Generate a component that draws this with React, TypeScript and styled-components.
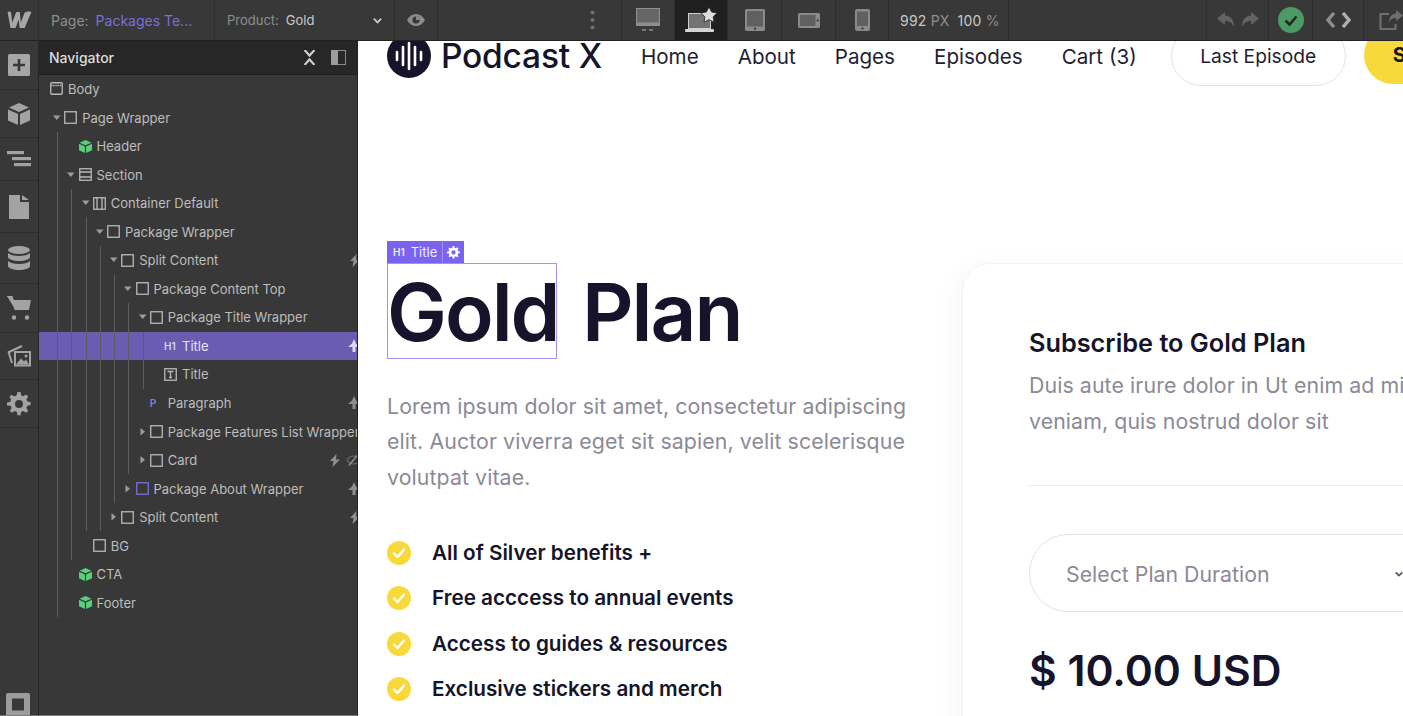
import React from 'react';
import styled, { createGlobalStyle } from 'styled-components';

const GlobalStyle = createGlobalStyle`
  html, body { margin: 0; padding: 0; background: #fff; }
  body { font-family: Inter, "Liberation Sans", sans-serif; overflow: hidden; }
  * { box-sizing: border-box; }
`;

const Screen = styled.div`
  width: 1403px;
  height: 716px;
  display: flex;
  flex-direction: column;
  overflow: hidden;
`;

/* ---------- top bar ---------- */

const TopBar = styled.div`
  height: 41px;
  flex: none;
  display: flex;
  background: #383838;
  border-bottom: 1px solid #222;
  color: #c8c8c8;
  font-size: 14px;
`;

const Cell = styled.div<{ $w?: number; $active?: boolean; $grow?: boolean }>`
  width: ${(p) => (p.$w ? `${p.$w}px` : 'auto')};
  flex: ${(p) => (p.$grow ? 1 : 'none')};
  display: flex;
  align-items: center;
  justify-content: center;
  border-right: 1px solid #2e2e2e;
  background: ${(p) => (p.$active ? '#202020' : 'transparent')};
`;

const PageCell = styled(Cell)`
  justify-content: flex-start;
  padding-left: 12px;
  gap: 7px;
`;

const ProductCell = styled(Cell)`
  justify-content: flex-start;
  padding-left: 12px;
  gap: 7px;
  font-size: 13px;
`;

const DotsCell = styled(Cell)`
  justify-content: flex-end;
  padding-right: 26px;
`;

const ShareCell = styled(Cell)`
  justify-content: flex-start;
  padding-left: 15px;
  overflow: hidden;
  border-right: 0;
`;

const Muted = styled.span`
  color: #8e8e8e;
`;

const PageName = styled.span`
  color: #7d6fd6;
`;

const ChevronSlot = styled.span`
  margin-left: auto;
  margin-right: 11px;
  display: flex;
`;

const Readout = styled(Cell)`
  font-size: 14px;
  gap: 8px;
  justify-content: flex-start;
  padding-left: 11px;
  letter-spacing: 0.2px;
`;

/* ---------- body ---------- */

const Workspace = styled.div`
  flex: 1;
  display: flex;
  min-height: 0;
`;

const Rail = styled.div`
  width: 39px;
  flex: none;
  display: flex;
  flex-direction: column;
  background: #383838;
  border-right: 1px solid #262626;
  border-bottom: 1px solid #7a7a7a;
`;

const RailItem = styled.div<{ $h: number }>`
  height: ${(p) => p.$h}px;
  flex: none;
  display: flex;
  align-items: center;
  justify-content: center;
  border-bottom: 1px solid #2e2e2e;
`;

const RailFooter = styled.div`
  margin-top: auto;
  display: flex;
  justify-content: center;
  padding-right: 2px;
`;

const Panel = styled.div`
  width: 319px;
  flex: none;
  background: #383838;
  border-right: 1px solid #222;
  border-bottom: 1px solid #7a7a7a;
  overflow: hidden;
`;

const PanelHead = styled.div`
  height: 33.7px;
  background: #272727;
  border-bottom: 1px solid #1f1f1f;
  display: flex;
  align-items: center;
  padding: 0 11px 0 10px;
  color: #dcdcdc;
  font-size: 14px;
  font-weight: 500;
`;

const HeadIcons = styled.div`
  margin-left: auto;
  display: flex;
  align-items: center;
  gap: 16px;
`;

const Group = styled.div<{ $depth: number }>`
  position: relative;
  &::before {
    content: '';
    position: absolute;
    z-index: 1;
    top: 0;
    bottom: 0;
    left: ${(p) => 3.75 + 14.25 * p.$depth}px;
    width: 1px;
    background: #5c5c5c;
  }
`;

const Row = styled.div<{ $depth: number; $selected?: boolean }>`
  height: 28.56px;
  display: flex;
  align-items: center;
  padding-left: ${(p) => 11 + 14.25 * (p.$depth - 1)}px;
  font-size: 13px;
  white-space: nowrap;
  overflow: hidden;
  position: relative;
  color: ${(p) => (p.$selected ? '#e6e3f6' : '#bdbdbd')};
  background: ${(p) => (p.$selected ? '#695cb1' : 'transparent')};
`;

const CaretSlot = styled.span`
  width: 14.25px;
  flex: none;
  display: flex;
  padding-left: 3px;
`;

const IconSlot = styled.span`
  width: 18px;
  flex: none;
  display: flex;
  align-items: center;
`;

const TagIcon = styled.span<{ $purple?: boolean }>`
  font-size: 10px;
  font-weight: 600;
  color: ${(p) => (p.$purple ? '#8a7be0' : '#d8d4ee')};
  line-height: 1;
`;

const Badges = styled.span`
  position: absolute;
  right: -3px;
  top: 0;
  bottom: 0;
  display: flex;
  align-items: center;
  gap: 7px;
`;

/* ---------- canvas ---------- */

const Canvas = styled.main`
  flex: 1;
  min-width: 0;
  overflow: hidden;
  background: #fff;
  color: #15142a;
`;

const Inner = styled.div`
  width: 1200px;
  margin-top: -15px;
  padding-left: 29px;
`;

const SiteHeader = styled.header`
  height: 60px;
  display: flex;
  align-items: center;
`;

const Brand = styled.div`
  display: flex;
  align-items: center;
  gap: 10px;
  font-size: 33.5px;
  font-weight: 500;
  letter-spacing: -0.2px;
  margin-right: 39px;
`;

const SiteNav = styled.nav`
  display: flex;
  gap: 39px;
  font-size: 20.6px;
  color: #1f1e33;
  margin-right: 34px;
`;

const OutlineButton = styled.div`
  width: 175px;
  height: 60px;
  flex: none;
  border: 1px solid #e3e3e8;
  border-radius: 30px;
  display: flex;
  align-items: center;
  justify-content: center;
  font-size: 19.2px;
  color: #1f1e33;
  margin-right: 18px;
`;

const YellowButton = styled.div`
  width: 175px;
  height: 58px;
  flex: none;
  align-self: flex-start;
  border-radius: 30px;
  background: #f8d93c;
  padding-left: 29px;
  display: flex;
  align-items: center;
  font-size: 20px;
  font-weight: 700;
`;

const Columns = styled.div`
  display: flex;
  align-items: flex-start;
  margin-top: 177px;
`;

const LeftCol = styled.div`
  width: 575px;
  flex: none;
`;

const Heading = styled.h1`
  margin: 0;
  height: 96px;
  font-size: 80px;
  line-height: 98px;
  font-weight: 600;
  white-space: nowrap;
  letter-spacing: -2px;
`;

const Selected = styled.span`
  position: relative;
  display: inline-block;
  width: 170px;
  height: 96px;
  margin-right: 25px;
  outline: 1px solid #a292f5;
  outline-offset: -1px;
`;

const SelectTag = styled.span`
  position: absolute;
  left: 0;
  top: -22px;
  height: 22px;
  display: flex;
  align-items: stretch;
  background: #7a63ee;
  color: #efecff;
  font-size: 13px;
  line-height: 22px;
  font-weight: 400;
  letter-spacing: 0;
`;

const TagLabel = styled.span`
  display: flex;
  align-items: center;
  gap: 6px;
  padding: 0 5px 0 6px;
  border-right: 1px solid #a292f5;
`;

const TagGear = styled.span`
  width: 21px;
  display: flex;
  align-items: center;
  justify-content: center;
`;

const TagH1 = styled.span`
  font-size: 10px;
  font-weight: 600;
`;

const Lead = styled.p`
  margin: 30px 0 0;
  width: 535px;
  font-size: 21.3px;
  line-height: 35.4px;
  color: #8b8a96;
  letter-spacing: 0.1px;
`;

const Features = styled.ul`
  list-style: none;
  margin: 46px 0 0;
  padding: 0;
  display: flex;
  flex-direction: column;
  gap: 21.2px;
`;

const Feature = styled.li`
  display: flex;
  align-items: center;
  gap: 21px;
  font-size: 20.7px;
  line-height: 24px;
  font-weight: 600;
`;

const Card = styled.section`
  width: 560px;
  height: 560px;
  flex: none;
  border: 1px solid #f3f3f6;
  border-radius: 28px;
  padding: 62px 0 0 66px;
  box-shadow: -6px 4px 24px rgba(20, 20, 70, 0.04);
`;

const CardTitle = styled.h2`
  margin: 0;
  font-size: 25.3px;
  line-height: 34px;
  font-weight: 600;
  white-space: nowrap;
`;

const CardText = styled.p`
  margin: 7px 0 0;
  font-size: 21.3px;
  line-height: 36px;
  color: #8b8a96;
  white-space: nowrap;
  letter-spacing: 0.1px;
`;

const Rule = styled.hr`
  margin: 46px 0 0;
  border: 0;
  border-top: 1px solid #ebebef;
`;

const PlanSelect = styled.div`
  margin-top: 48px;
  width: 490px;
  height: 78px;
  border: 1px solid #e3e3e8;
  border-radius: 39px;
  display: flex;
  align-items: center;
  padding: 2px 0 0 36px;
  gap: 124px;
  font-size: 21.3px;
  color: #8b8a96;
`;

const Price = styled.div`
  margin-top: 33px;
  font-size: 42.6px;
  line-height: 52px;
  font-weight: 600;
  white-space: nowrap;
`;

/* ---------- icons ---------- */

const G = '#a3a3a3';

const WebflowLogo = () => (
  <svg width="25" height="18" viewBox="1.5 2 22 15">
    <path d="M2 2.5c1.5-1 3-.6 3.2 1L6 12l3.6-9.5h3.2L13.6 12l3-8c.6-1.6 3-2.4 6.4-1.6L17 16.5h-4.4l-.8-7.2-2.8 7.2H4.6z" fill="#a8a8a8" />
  </svg>
);

const Chevron = ({ color = '#c8c8c8', size = 11 }: { color?: string; size?: number }) => (
  <svg width={size} height={size} viewBox="0 0 12 12">
    <path d="M2 4l4 4 4-4" fill="none" stroke={color} strokeWidth="2" />
  </svg>
);

const Eye = () => (
  <svg width="20" height="14" viewBox="0 0 20 14">
    <path d="M1 7c2.4-4 5.4-6 9-6s6.600 2 9 6c-2.400 4-5.400 6-9 6s-6.600-2-9-6z" fill="#8c8c8c" />
    <circle cx="10" cy="7" r="3.600" fill="#383838" />
    <path d="M10 3.400a3.600 3.600 0 0 1 3.600 3.600h-3.600z" fill="#8c8c8c" />
  </svg>
);

const Dots = () => (
  <svg width="5" height="20" viewBox="0 0 5 20">
    <circle cx="2.500" cy="2.500" r="2" fill="#6f6f6f" />
    <circle cx="2.500" cy="10" r="2" fill="#6f6f6f" />
    <circle cx="2.500" cy="17.500" r="2" fill="#6f6f6f" />
  </svg>
);

const Desktop = () => (
  <svg width="24" height="24" viewBox="0 0 24 24">
    <rect x="0.500" y="0.500" width="23" height="17" fill="#666" stroke="#8e8e8e" />
    <rect x="0" y="14.500" width="24" height="3" fill="#8e8e8e" />
    <rect x="6" y="21" width="4" height="2" fill="#777" />
    <rect x="13" y="21" width="4" height="2" fill="#777" />
  </svg>
);

const LaptopStar = () => (
  <svg width="32" height="26" viewBox="0 0 32 26">
    <rect x="3.500" y="6.500" width="22" height="15" fill="#737373" stroke="#cfcfcf" />
    <rect x="0" y="22" width="29" height="3" rx="1" fill="#d4d4d4" />
    <path d="M24 0l2.700 5 5.300.9-3.800 3.900.8 5.400-5-2.500-5 2.500.8-5.400L16 5.900l5.300-.9z" fill="#dcdcdc" stroke="#202020" strokeWidth="0.800" />
  </svg>
);

const Tablet = () => (
  <svg width="20" height="22" viewBox="0 0 20 22">
    <rect width="20" height="22" rx="1.500" fill="#8a8a8a" />
    <rect x="2" y="2" width="16" height="15.500" fill="#606060" />
    <circle cx="10" cy="19.700" r="1.100" fill="#333" />
  </svg>
);

const TabletWide = () => (
  <svg width="22" height="15" viewBox="0 0 22 15">
    <rect width="22" height="15" rx="1.500" fill="#8a8a8a" />
    <rect x="2" y="2" width="15.500" height="11" fill="#606060" />
    <circle cx="19.700" cy="7.500" r="1.100" fill="#333" />
  </svg>
);

const Phone = () => (
  <svg width="15" height="22" viewBox="0 0 15 22">
    <rect width="15" height="22" rx="2" fill="#8a8a8a" />
    <rect x="2" y="2.500" width="11" height="14.500" fill="#606060" />
    <circle cx="7.500" cy="19.500" r="1.100" fill="#333" />
  </svg>
);

const UndoRedo = () => (
  <svg width="42" height="16" viewBox="0 0 42 16">
    <path d="M8 0L0 6.500 8 13V9c4 0 7 1.500 9 6 0-7-3-11-9-11.500z" fill="#636363" />
    <path d="M34 0l8 6.500-8 6.500V9c-4 0-7 1.500-9 6 0-7 3-11 9-11.500z" fill="#636363" />
  </svg>
);

const Published = () => (
  <svg width="26" height="26" viewBox="0 0 26 26">
    <circle cx="13" cy="13" r="13" fill="#4c9a64" />
    <path d="M7.500 13.500l4 4 7-8" fill="none" stroke="#1e2a22" strokeWidth="2.600" />
  </svg>
);

const CodeBrackets = () => (
  <svg width="25" height="16" viewBox="0 0 25 16">
    <path d="M8 1L2 8l6 7" fill="none" stroke="#8f8f8f" strokeWidth="3.400" />
    <path d="M17 1l6 7-6 7" fill="none" stroke="#b0b0b0" strokeWidth="3.400" />
  </svg>
);

const ShareOut = () => (
  <svg width="26" height="20" viewBox="0 0 26 20" style={{ flex: 'none' }}>
    <path d="M10 4H1.500v15h15v-5" fill="none" stroke="#6e6e6e" strokeWidth="2.200" />
    <path d="M17 0l7 5.500-7 5.500V8c-4 0-6 1.500-7 5 0-6 2.500-9 7-9.500z" fill="#6e6e6e" />
  </svg>
);

const Plus = () => (
  <svg width="22" height="22" viewBox="0 0 22 22">
    <rect width="22" height="22" rx="1.500" fill="#a6a6a6" />
    <path d="M11 5v12M5 11h12" stroke="#383838" strokeWidth="2.600" />
  </svg>
);

const Cube = ({ size = 22, color = G }: { size?: number; color?: string }) => (
  <svg width={size} height={size} viewBox="0 0 22 22">
    <path d="M11 0l10 4.500L11 9 1 4.500z" fill={color} />
    <path d="M0 6.500l10 4.500v11L0 17.500zM22 6.500L12 11v11l10-4.500z" fill={color} />
  </svg>
);

const Lines = () => (
  <svg width="24" height="16" viewBox="0 0 24 16">
    <rect x="0" y="0" width="17" height="3.200" fill={G} />
    <rect x="5" y="6" width="19" height="3.200" fill={G} />
    <rect x="7" y="12" width="17" height="3.200" fill={G} />
  </svg>
);

const Doc = () => (
  <svg width="20" height="24" viewBox="0 0 20 24">
    <path d="M0 0h11v7h9v17H0zM13 0l7 5h-7z" fill={G} />
  </svg>
);

const Database = () => (
  <svg width="22" height="24" viewBox="0 0 22 24">
    <ellipse cx="11" cy="4" rx="11" ry="4" fill={G} />
    <path d="M0 7c2 2 6 3 11 3s9-1 11-3v4c0 2.200-5 4-11 4S0 13.200 0 11z" fill={G} />
    <path d="M0 15c2 2 6 3 11 3s9-1 11-3v5c0 2.200-5 4-11 4S0 22.200 0 20z" fill={G} />
  </svg>
);

const Cart = () => (
  <svg width="24" height="24" viewBox="0 0 24 24">
    <path d="M0 0h5l1.500 4H24l-2 10H8.500" fill={G} />
    <path d="M0 0h4.500l4 14" fill="none" stroke={G} strokeWidth="1.800" />
    <circle cx="7" cy="21.500" r="2.200" fill={G} />
    <circle cx="20" cy="21.500" r="2.200" fill={G} />
  </svg>
);

const Images = () => (
  <svg width="24" height="22" viewBox="0 0 24 22">
    <path d="M1 7.500l14-6.500" stroke={G} strokeWidth="2" fill="none" />
    <path d="M1.500 7l3.500 11" stroke={G} strokeWidth="2" fill="none" />
    <rect x="7" y="6" width="17" height="15.500" fill={G} />
    <rect x="9" y="8" width="13" height="11.500" fill="#383838" />
    <path d="M9 19.500l5-6 3 3 2-2 3 5z" fill={G} />
    <circle cx="19" cy="11" r="1.500" fill={G} />
  </svg>
);

const GearPath = 'M10.500 0h3l.6 3.200 2.300 1 2.700-1.800 2.100 2.100-1.800 2.700 1 2.300 3.200.6v3l-3.200.6-1 2.300 1.800 2.700-2.100 2.100-2.700-1.800-2.300 1-.6 3.200h-3l-.6-3.200-2.300-1-2.700 1.800-2.100-2.100 1.800-2.700-1-2.300L0 13.500v-3l3.200-.6 1-2.300-1.800-2.700 2.100-2.100 2.700 1.800 2.300-1zM12 8a4 4 0 1 0 0 8 4 4 0 0 0 0-8z';

const Gear = ({ size = 24, color = G }: { size?: number; color?: string }) => (
  <svg width={size} height={size} viewBox="0 0 24 24">
    <path d={GearPath} fill={color} fillRule="evenodd" />
  </svg>
);

const StopSquare = () => (
  <svg width="24" height="22" viewBox="0 0 24 22">
    <path d="M2 0h20a2 2 0 0 1 2 2v20H0V2a2 2 0 0 1 2-2z" fill="#9c9c9c" />
    <rect x="6" y="5.500" width="12" height="12" fill="#383838" />
  </svg>
);

const CollapseArrows = () => (
  <svg width="11" height="15" viewBox="0 0 11 15">
    <path d="M0.500 0l5 5.500 5-5.500M0.500 15l5-5.500 5 5.500" fill="none" stroke="#cfcfcf" strokeWidth="2.200" />
  </svg>
);

const PanelDock = () => (
  <svg width="15" height="15" viewBox="0 0 15 15">
    <rect x="0.500" y="0.500" width="14" height="14" fill="none" stroke="#8a8a8a" />
    <rect x="0" y="0" width="7" height="15" fill="#9c9c9c" />
  </svg>
);

const Caret = ({ open }: { open: boolean }) => (
  <svg width="8" height="8" viewBox="0 0 8 8">
    {open ? <path d="M0 1.500h7.500L3.750 6z" fill="#9c9c9c" /> : <path d="M1.500 0v7.500L6 3.750z" fill="#9c9c9c" />}
  </svg>
);

const BoxIcon = ({ color = '#b9b9b9' }: { color?: string }) => (
  <svg width="13" height="13" viewBox="0 0 13 13">
    <rect x="0.750" y="0.750" width="11.500" height="11.500" fill="none" stroke={color} strokeWidth="1.300" />
  </svg>
);

const BodyIcon = () => (
  <svg width="13" height="13" viewBox="0 0 13 13">
    <rect x="0.750" y="0.750" width="11.500" height="11.500" rx="1" fill="none" stroke="#b9b9b9" strokeWidth="1.300" />
    <path d="M1 3.500h11" stroke="#b9b9b9" strokeWidth="1.300" strokeDasharray="1.500 0.700" />
  </svg>
);

const SectionIcon = () => (
  <svg width="13" height="13" viewBox="0 0 13 13">
    <rect x="0.750" y="0.750" width="11.500" height="11.500" fill="none" stroke="#b9b9b9" strokeWidth="1.300" />
    <path d="M1 4h11M1 9h11" stroke="#b9b9b9" strokeWidth="1.300" />
  </svg>
);

const ContainerIcon = () => (
  <svg width="13" height="13" viewBox="0 0 13 13">
    <rect x="0.750" y="0.750" width="11.500" height="11.500" fill="none" stroke="#b9b9b9" strokeWidth="1.300" />
    <path d="M4 1v11M9 1v11" stroke="#b9b9b9" strokeWidth="1.300" />
  </svg>
);

const TextIcon = () => (
  <svg width="13" height="13" viewBox="0 0 13 13">
    <rect x="0.750" y="0.750" width="11.500" height="11.500" fill="none" stroke="#b9b9b9" strokeWidth="1.300" />
    <path d="M3.500 3.500h6M6.500 3.500v6M5 9.500h3" fill="none" stroke="#b9b9b9" strokeWidth="1.300" />
  </svg>
);

const Bolt = () => (
  <svg width="10" height="13" viewBox="0 0 10 13">
    <path d="M6.500 0L0 7h3.500L2.500 13 10 5.500H6z" fill="#8f8f8f" />
  </svg>
);

const Trigger = ({ color = '#8f8f8f' }: { color?: string }) => (
  <svg width="12" height="13" viewBox="0 0 12 13">
    <path d="M6 0l2 4.500 4 3.500H7.500v5h-3V8H0l4-3.500z" fill={color} />
  </svg>
);

const EyeOff = () => (
  <svg width="13" height="12" viewBox="0 0 13 12">
    <path d="M0 6c1.500-2.500 3.500-4 6.500-4S11.500 3.500 13 6c-1.500 2.500-3.500 4-6.500 4S1.500 8.500 0 6z" fill="none" stroke="#6f6f6f" strokeWidth="1.200" />
    <path d="M2 11.500L11 .5" stroke="#8f8f8f" strokeWidth="1.400" />
  </svg>
);

const YellowCheck = () => (
  <svg width="24" height="24" viewBox="0 0 24 24" style={{ flex: 'none' }}>
    <circle cx="12" cy="12" r="12" fill="#f8d93c" />
    <path d="M7 12.500l3.500 3.500 6.500-7.500" fill="none" stroke="#fff" strokeWidth="2.400" strokeLinecap="round" strokeLinejoin="round" />
  </svg>
);

const PodcastMark = () => (
  <svg width="44" height="44" viewBox="0 0 44 44">
    <circle cx="22" cy="22" r="22" fill="#15142a" />
    <g stroke="#fff" strokeWidth="2.600" strokeLinecap="round">
      <path d="M10 18v8M16 13v18M22 9v26M28 13v18M34 18v8" />
    </g>
  </svg>
);

/* ---------- data ---------- */

type Node = {
  label: string;
  icon: React.ReactNode;
  root?: boolean;
  open?: boolean;
  closed?: boolean;
  badges?: React.ReactNode;
  selected?: boolean;
  children?: Node[];
};

const box = <BoxIcon />;
const comp = <Cube size={13} color="#5ad07d" />;

const tree: Node[] = [
  { label: 'Body', icon: <BodyIcon />, root: true },
  {
    label: 'Page Wrapper',
    icon: box,
    open: true,
    children: [
      { label: 'Header', icon: comp },
      {
        label: 'Section',
        icon: <SectionIcon />,
        open: true,
        children: [
          {
            label: 'Container Default',
            icon: <ContainerIcon />,
            open: true,
            children: [
              {
                label: 'Package Wrapper',
                icon: box,
                open: true,
                children: [
                  {
                    label: 'Split Content',
                    icon: box,
                    open: true,
                    badges: <Bolt />,
                    children: [
                      {
                        label: 'Package Content Top',
                        icon: box,
                        open: true,
                        children: [
                          {
                            label: 'Package Title Wrapper',
                            icon: box,
                            open: true,
                            children: [
                              { label: 'Title', icon: <TagIcon>H1</TagIcon>, selected: true, badges: <Trigger color="#dcd8f2" /> },
                              { label: 'Title', icon: <TextIcon /> },
                            ],
                          },
                          { label: 'Paragraph', icon: <TagIcon $purple>P</TagIcon>, badges: <Trigger /> },
                          { label: 'Package Features List Wrapper', icon: box, closed: true },
                          { label: 'Card', icon: box, closed: true, badges: <><Bolt /><EyeOff /></> },
                        ],
                      },
                      { label: 'Package About Wrapper', icon: <BoxIcon color="#7d6fd6" />, closed: true, badges: <Trigger /> },
                    ],
                  },
                  { label: 'Split Content', icon: box, closed: true, badges: <Bolt /> },
                ],
              },
            ],
          },
          { label: 'BG', icon: box },
        ],
      },
      { label: 'CTA', icon: comp },
      { label: 'Footer', icon: comp },
    ],
  },
];

const railItems: { h: number; icon: React.ReactNode }[] = [
  { h: 49, icon: <Plus /> },
  { h: 48, icon: <Cube /> },
  { h: 43, icon: <Lines /> },
  { h: 52, icon: <Doc /> },
  { h: 51, icon: <Database /> },
  { h: 49, icon: <Cart /> },
  { h: 47, icon: <Images /> },
  { h: 48, icon: <Gear /> },
];

const features = [
  'All of Silver benefits +',
  'Free acccess to annual events',
  'Access to guides & resources',
  'Exclusive stickers and merch',
];

const TreeRows = ({ nodes, depth }: { nodes: Node[]; depth: number }) => (
  <>
    {nodes.map((n, i) => (
      <React.Fragment key={`${n.label}-${i}`}>
        <Row $depth={depth} $selected={n.selected}>
          {!n.root && (
            <CaretSlot>{(n.open || n.closed) && <Caret open={!!n.open} />}</CaretSlot>
          )}
          <IconSlot>{n.icon}</IconSlot>
          {n.label}
          {n.badges && <Badges>{n.badges}</Badges>}
        </Row>
        {n.children && (
          <Group $depth={depth}>
            <TreeRows nodes={n.children} depth={depth + 1} />
          </Group>
        )}
      </React.Fragment>
    ))}
  </>
);

const App: React.FC = () => (
  <Screen>
    <GlobalStyle />
    <TopBar>
      <Cell $w={39}><WebflowLogo /></Cell>
      <PageCell $w={176}>
        <Muted>Page:</Muted>
        <PageName>Packages Te...</PageName>
      </PageCell>
      <ProductCell $w={180}>
        <Muted>Product:</Muted>
        Gold
        <ChevronSlot><Chevron /></ChevronSlot>
      </ProductCell>
      <Cell $w={43}><Eye /></Cell>
      <DotsCell $w={184}><Dots /></DotsCell>
      <Cell $w={53}><Desktop /></Cell>
      <Cell $w={53} $active><LaptopStar /></Cell>
      <Cell $w={54}><Tablet /></Cell>
      <Cell $w={54}><TabletWide /></Cell>
      <Cell $w={53}><Phone /></Cell>
      <Readout $w={120}>
        <span>992 <Muted>PX</Muted></span>
        <span>100 <Muted>%</Muted></span>
      </Readout>
      <Cell $grow />
      <Cell $w={62}><UndoRedo /></Cell>
      <Cell $w={44}><Published /></Cell>
      <Cell $w={51}><CodeBrackets /></Cell>
      <ShareCell $w={39}><ShareOut /></ShareCell>
    </TopBar>
    <Workspace>
      <Rail>
        {railItems.map((r, i) => (
          <RailItem key={i} $h={r.h}>{r.icon}</RailItem>
        ))}
        <RailFooter><StopSquare /></RailFooter>
      </Rail>
      <Panel>
        <PanelHead>
          Navigator
          <HeadIcons>
            <CollapseArrows />
            <PanelDock />
          </HeadIcons>
        </PanelHead>
        <TreeRows nodes={tree} depth={1} />
      </Panel>
      <Canvas>
        <Inner>
          <SiteHeader>
            <Brand><PodcastMark />Podcast X</Brand>
            <SiteNav>
              <span>Home</span>
              <span>About</span>
              <span>Pages</span>
              <span>Episodes</span>
              <span>Cart (3)</span>
            </SiteNav>
            <OutlineButton>Last Episode</OutlineButton>
            <YellowButton>Subscribe</YellowButton>
          </SiteHeader>
          <Columns>
            <LeftCol>
              <Heading>
                <Selected>
                  <SelectTag>
                    <TagLabel><TagH1>H1</TagH1>Title</TagLabel>
                    <TagGear><Gear size={13} color="#fff" /></TagGear>
                  </SelectTag>
                  Gold
                </Selected>
                Plan
              </Heading>
              <Lead>
                Lorem ipsum dolor sit amet, consectetur adipiscing elit. Auctor viverra eget sit sapien, velit scelerisque volutpat vitae.
              </Lead>
              <Features>
                {features.map((f) => (
                  <Feature key={f}><YellowCheck />{f}</Feature>
                ))}
              </Features>
            </LeftCol>
            <Card>
              <CardTitle>Subscribe to Gold Plan</CardTitle>
              <CardText>
                Duis aute irure dolor in Ut enim ad minim
                <br />
                veniam, quis nostrud dolor sit
              </CardText>
              <Rule />
              <PlanSelect>
                Select Plan Duration
                <Chevron color="#55546a" size={10} />
              </PlanSelect>
              <Price>$ 10.00 USD</Price>
            </Card>
          </Columns>
        </Inner>
      </Canvas>
    </Workspace>
  </Screen>
);

export default App;
